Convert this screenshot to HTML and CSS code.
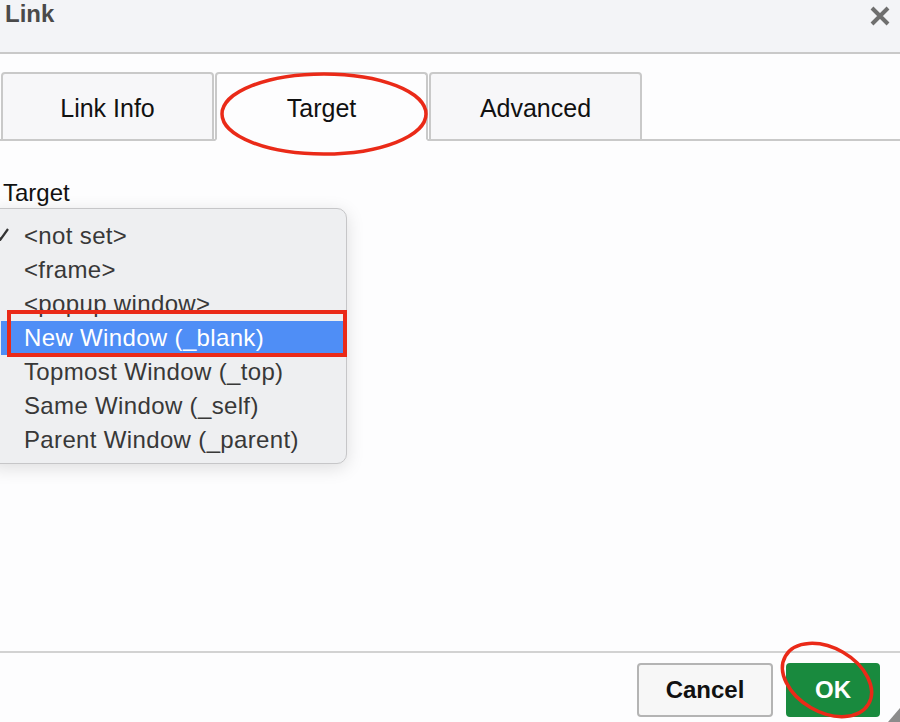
FILE: index.html
```html
<!DOCTYPE html>
<html>
<head>
<meta charset="utf-8">
<title>Link</title>
<link rel="stylesheet" href="styles.css">
</head>
<body>
<div class="dialog">
  <header class="titlebar">
    <span class="title">Link</span>
    <svg class="close" width="20" height="20" viewBox="0 0 20 20"><path d="M2 2 L18 18 M18 2 L2 18" stroke="#6f6f6f" stroke-width="4" stroke-linecap="butt"/></svg>
  </header>
  <main class="content">
    <nav class="tabs">
      <div class="tab">Link Info</div>
      <div class="tab active">Target</div>
      <div class="tab">Advanced</div>
    </nav>
    <div class="field">
      <div class="field-label">Target</div>
      <ul class="menu">
        <li class="item checked"><svg class="check" width="13" height="13" viewBox="0 0 13 13"><path d="M1 7 L4.5 11.5 L12 1" fill="none" stroke="#333" stroke-width="2.2"/></svg>&lt;not set&gt;</li>
        <li class="item">&lt;frame&gt;</li>
        <li class="item">&lt;popup window&gt;</li>
        <li class="item selected">New Window (_blank)</li>
        <li class="item">Topmost Window (_top)</li>
        <li class="item">Same Window (_self)</li>
        <li class="item">Parent Window (_parent)</li>
      </ul>
    </div>
  </main>
  <footer class="footer">
    <button class="btn btn-cancel">Cancel</button>
    <button class="btn btn-ok">OK</button>
  </footer>
  <span class="grip"></span>
  <svg class="annotations" width="900" height="722" viewBox="0 0 900 722">
    <ellipse cx="324" cy="114" rx="102" ry="40" fill="none" stroke="#ea2a18" stroke-width="3.5"/>
    <rect x="9" y="312" width="336" height="43" fill="none" stroke="#ea2a18" stroke-width="4"/>
    <ellipse cx="827" cy="680" rx="48" ry="32" transform="rotate(30 827 680)" fill="none" stroke="#ea2a18" stroke-width="3.5"/>
  </svg>
</div>
</body>
</html>
```

FILE: styles.css
```css
* { box-sizing: border-box; }
html, body { margin: 0; padding: 0; }
body {
  width: 900px;
  height: 722px;
  overflow: hidden;
  font-family: "Liberation Sans", Arial, sans-serif;
  background: #fdfdfe;
}
.dialog {
  position: relative;
  width: 900px;
  height: 722px;
  display: flex;
  flex-direction: column;
}
.titlebar {
  height: 54px;
  background: #f3f4f7;
  border-bottom: 2px solid #c9c9c9;
  display: flex;
  justify-content: space-between;
  align-items: flex-start;
  padding: 0 10px 0 5px;
}
.title {
  font-size: 24px;
  line-height: 28px;
  font-weight: bold;
  color: #4a4a4a;
}
.close { margin-top: 6px; }
.content {
  flex: 1;
  display: flex;
  flex-direction: column;
}
.tabs {
  margin-top: 18px;
  display: flex;
  padding-left: 1px;
  border-bottom: 2px solid #c9c9c9;
}
.tab {
  width: 213px;
  height: 69px;
  margin-right: 1px;
  margin-bottom: -2px;
  border: 2px solid #c9c9c9;
  border-radius: 4px 4px 0 0;
  background: #f7f7f9;
  display: flex;
  align-items: center;
  justify-content: center;
  font-size: 25px;
  color: #111;
  padding-top: 3px;
}
.tab.active {
  background: #fdfdfe;
  border-bottom-color: #fdfdfe;
}
.field { margin-top: 38px; }
.field-label {
  font-size: 24px;
  line-height: 28px;
  color: #111;
  padding-left: 3px;
}
.menu {
  list-style: none;
  margin: 1px 0 0 -12px;
  padding: 10px 0 6px;
  width: 359px;
  background: #eeeff1;
  border: 1px solid #c6c6c8;
  border-radius: 10px;
  box-shadow: 0 4px 18px rgba(0, 0, 0, 0.13);
}
.item {
  position: relative;
  height: 34px;
  line-height: 34px;
  padding-left: 35px;
  font-size: 24px;
  letter-spacing: 0.35px;
  color: #383838;
  white-space: nowrap;
}
.item.selected {
  background: #4f8ef6;
  color: #fff;
  margin-left: 12px;
  padding-left: 23px;
}
.check {
  position: absolute;
  left: 7px;
  top: 9px;
}
.footer {
  height: 71px;
  border-top: 2px solid #d2d2d2;
  display: flex;
  justify-content: flex-end;
  align-items: flex-start;
  gap: 13px;
  padding: 10px 20px 5px 0;
}
.btn {
  height: 54px;
  font-family: "Liberation Sans", Arial, sans-serif;
  font-size: 24px;
  font-weight: bold;
  border-radius: 4px;
  padding: 0;
}
.btn-cancel {
  width: 136px;
  background: #f7f7f7;
  border: 2px solid #b4b4b4;
  color: #111;
}
.btn-ok {
  width: 94px;
  background: #198a3e;
  border: 2px solid #198a3e;
  color: #fff;
}
.grip {
  position: absolute;
  right: 0;
  bottom: 0;
  width: 0;
  height: 0;
  border-left: 12px solid transparent;
  border-bottom: 14px solid #8c8c8c;
}
.annotations {
  position: absolute;
  left: 0;
  top: 0;
  pointer-events: none;
}
```
